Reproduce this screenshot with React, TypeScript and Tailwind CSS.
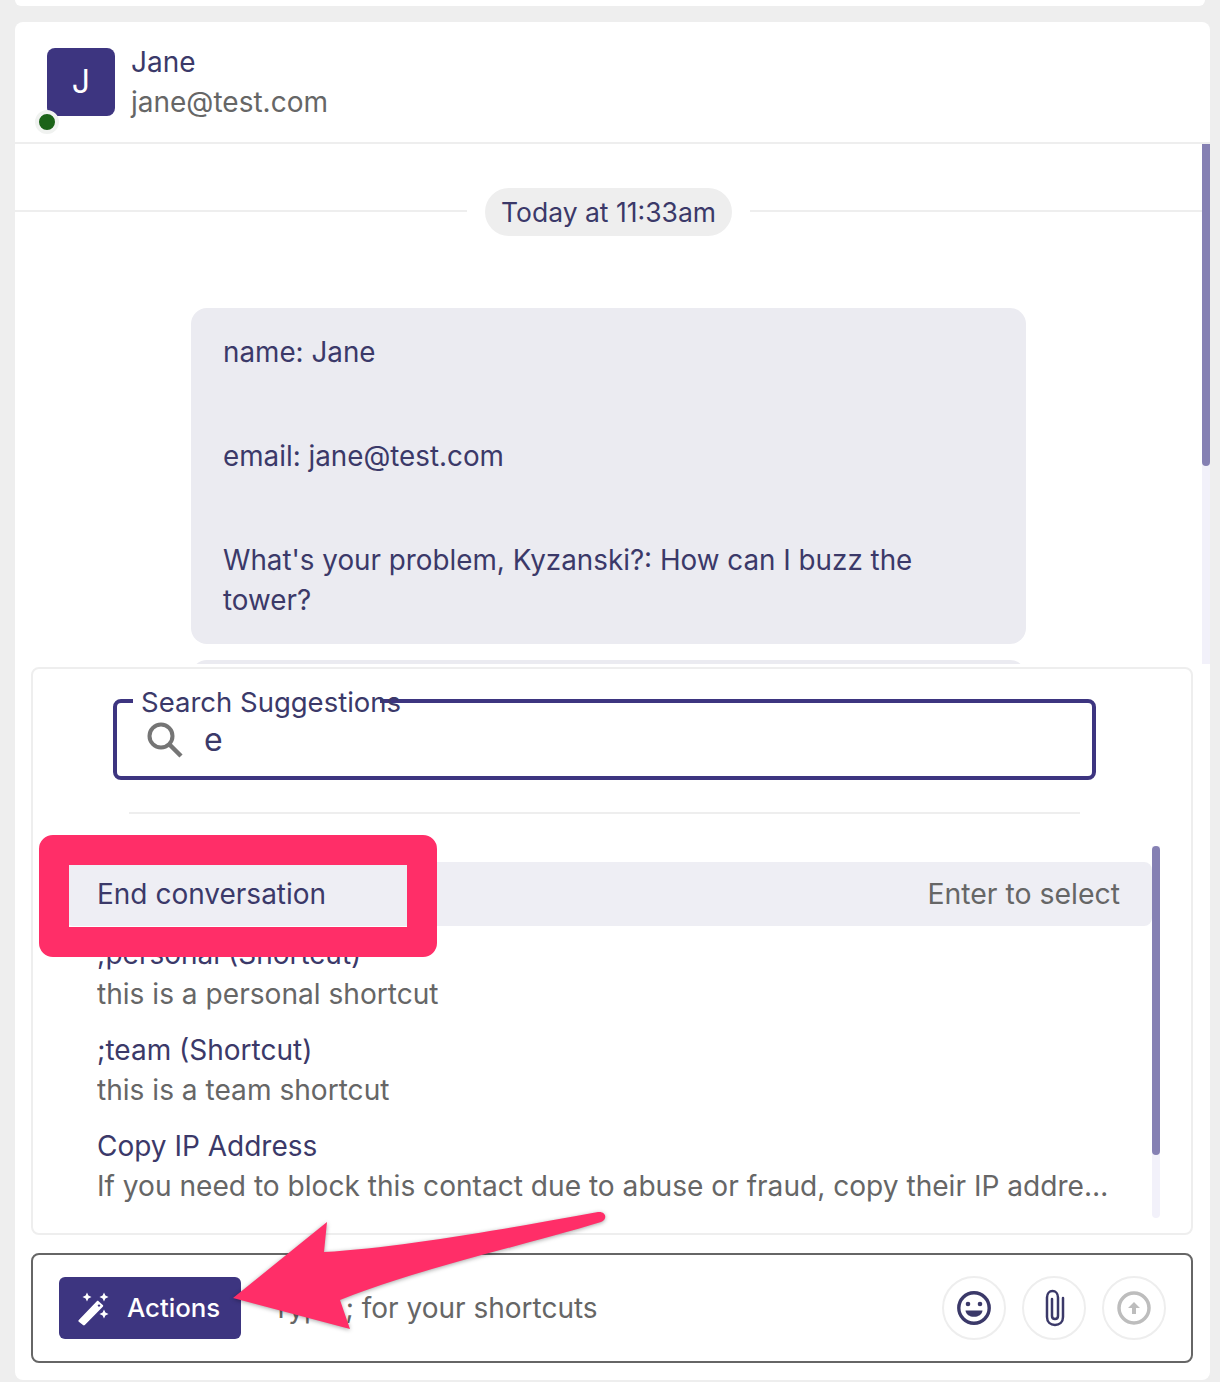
export default function App() {
  const rows = [
    { title: ";personal (Shortcut)", desc: "this is a personal shortcut" },
    { title: ";team (Shortcut)", desc: "this is a team shortcut" },
    {
      title: "Copy IP Address",
      desc: "If you need to block this contact due to abuse or fraud, copy their IP address and add it to your block list",
    },
  ];

  return (
    <div className="relative w-[1220px] h-[1382px] overflow-hidden bg-[#eeeeee] font-['Inter',sans-serif] text-[28px] leading-[40px] text-[#3b3969]">
      <div className="h-[6px] bg-white rounded-b-[6px] mx-[15px]" />

      {/* Conversation card */}
      <div className="ml-[15px] mr-[10px] mt-[16px] h-[1358px] bg-white rounded-[8px] flex flex-col overflow-hidden">
        {/* Header */}
        <div className="h-[122px] shrink-0 border-b-2 border-[#eeeeee] pl-[32px] pt-[26px] flex gap-[16px]">
          <div className="relative w-[68px] h-[68px] bg-[#3d3580] rounded-[8px] flex items-center justify-center text-white text-[32px]">
            J
            <span className="absolute left-[-12px] top-[62px] w-[24px] h-[24px] rounded-full bg-[#1b6318] border-4 border-[#f0f2f0]" />
          </div>
          <div className="-mt-[6px]">
            <div>Jane</div>
            <div className="text-[#666666]">jane@test.com</div>
          </div>
        </div>

        {/* Messages */}
        <div className="h-[520px] shrink-0 flex overflow-hidden">
          <div className="flex-1 overflow-hidden">
            <div className="flex items-center mt-[44px]">
              <div className="flex-1 h-[2px] mb-[2px] bg-[#eeeeee]" />
              <div className="mx-[18px] w-[247px] h-[48px] flex items-center justify-center rounded-full bg-[#eeeeee] text-[26.5px]">
                Today at 11:33am
              </div>
              <div className="flex-1 h-[2px] mb-[2px] bg-[#eeeeee]" />
            </div>
            <div className="ml-[176px] w-[835px] mt-[72px] bg-[#ebebf1] rounded-[16px] px-[32px] py-[24px] text-[27.8px]">
              <p>name: Jane</p>
              <p className="mt-[64px]">email: jane@test.com</p>
              <p className="mt-[64px]">What's your problem, Kyzanski?: How can I buzz the tower?</p>
            </div>
            <div className="ml-[176px] w-[835px] mt-[16px] h-[80px] bg-[#ebebf1] rounded-[16px]" />
          </div>
          <div className="w-[8px] bg-[#f2f1fa]">
            <div className="h-[322px] bg-[#8580b3] rounded-b-[4px]" />
          </div>
        </div>

        {/* Suggestions */}
        <div className="ml-[16px] mr-[17px] mt-[3px] h-[568px] shrink-0 border-2 border-[#eeeeee] rounded-[8px] flex flex-col">
          <div className="relative ml-[80px] mt-[30px] w-[983px] h-[81px] shrink-0 border-4 border-[#3d3580] rounded-[8px] flex items-center pl-[31px] pt-[2px]">
            <span className="absolute left-[16px] top-[-4px] w-[247px] h-[4px] bg-white" />
            <span className="absolute left-[24px] top-[-21px] text-[27.5px] whitespace-nowrap">Search Suggestions</span>
            <svg width="36" height="36" viewBox="0 0 36 36" fill="none" stroke="#757575" strokeWidth="4" className="-mt-[1px] -ml-[1px]">
              <circle cx="14" cy="14" r="11.5" />
              <path d="M22.5 22.5 L34 34" strokeWidth="4.5" />
            </svg>
            <span className="ml-[21px] -mt-[2px] text-[32px]">e</span>
          </div>
          <div className="ml-[96px] mt-[32px] w-[951px] h-[2px] shrink-0 bg-[#eeeeee]" />
          <div className="mt-[32px] flex pl-[32px] pr-[31px]">
            <div className="flex-1 min-w-0 pt-[16px]">
              <div className="h-[64px] bg-[#eeeef4] rounded-[8px] pl-[32px] pr-[32px] flex items-center justify-between">
                <span>End conversation</span>
                <span className="text-[#666666] text-[28.4px]">Enter to select</span>
              </div>
              {rows.map((r) => (
                <div key={r.title} className="pl-[32px] pr-[40px] py-[8px]">
                  <div className="truncate">{r.title}</div>
                  <div className="truncate text-[#666666] text-[28.1px]">{r.desc}</div>
                </div>
              ))}
            </div>
            <div className="w-[8px] h-[372px] bg-[#f2f1fa] rounded-b-[4px]">
              <div className="h-[309px] bg-[#8580b3] rounded-[4px]" />
            </div>
          </div>
        </div>

        {/* Composer */}
        <div className="ml-[16px] mr-[17px] mt-[18px] h-[110px] shrink-0 border-2 border-[#666666] rounded-[8px] flex items-center pl-[26px] pr-[25px]">
          <button className="w-[182px] h-[62px] bg-[#3d3580] rounded-[6px] flex items-center pl-[17px] gap-[15px] text-white font-medium text-[25.8px]">
            <svg width="36" height="36" viewBox="0 0 36 36" fill="currentColor">
              <path d="M11 2.5 L12.4 5.6 L15.5 7 L12.4 8.4 L11 11.5 L9.6 8.4 L6.5 7 L9.6 5.6 Z" />
              <path d="M28 2.5 L29.4 5.6 L32.5 7 L29.4 8.4 L28 11.5 L26.6 8.4 L23.5 7 L26.6 5.6 Z" />
              <path d="M28 19.5 L29.4 22.6 L32.5 24 L29.4 25.4 L28 28.5 L26.6 25.4 L23.5 24 L26.6 22.6 Z" />
              <path d="M2.8 30 L20.8 11.2 C21.4 10.6 22 10.6 22.6 11.2 L26.8 15 C27.4 15.6 27.4 16.2 26.8 16.8 L8.8 35 C8.2 35.6 7.6 35.6 7 35 L2.8 31.8 C2.2 31.2 2.2 30.6 2.8 30 Z M21.5 15.6 L23 17 L24.5 15.6 L23 14.2 Z" fillRule="evenodd" />
            </svg>
            Actions
          </button>
          <div className="ml-[31px] flex-1 text-[#666666]">Type ; for your shortcuts</div>
          <div className="flex gap-[16px]">
            <div className="w-[64px] h-[64px] rounded-full border-2 border-[#eeeeee] flex items-center justify-center">
              <svg width="36" height="36" viewBox="0 0 36 36">
                <circle cx="18" cy="18" r="15.2" fill="none" stroke="#3b3969" strokeWidth="3.4" />
                <circle cx="12" cy="14" r="2.3" fill="#3b3969" />
                <circle cx="24" cy="14" r="2.3" fill="#3b3969" />
                <path d="M9.5 20.5 H26.5 C26 24.5 22.5 26.8 18 26.8 C13.5 26.8 10 24.5 9.5 20.5 Z" fill="#3b3969" />
              </svg>
            </div>
            <div className="w-[64px] h-[64px] rounded-full border-2 border-[#eeeeee] flex items-center justify-center">
              <svg width="24" height="38" viewBox="0 0 24 38" fill="none" stroke="#3b3969" strokeWidth="2.5" strokeLinecap="round">
                <path d="M21 9 V28 C21 33 17.5 36 13 36 C8.5 36 5 33 5 28 V8.5 C5 4.5 7.5 2 10.5 2 C13.5 2 16 4.5 16 8.5 V27 C16 29 14.8 30 13 30 C11.2 30 10 29 10 27 V10" />
              </svg>
            </div>
            <div className="w-[64px] h-[64px] rounded-full border-2 border-[#eeeeee] flex items-center justify-center">
              <svg width="36" height="36" viewBox="0 0 36 36" fill="none">
                <circle cx="18" cy="18" r="15" stroke="#bdbdbd" strokeWidth="3.5" />
                <path d="M18 12 L24 18 H20 V24 H16 V18 H12 Z" fill="#bdbdbd" />
              </svg>
            </div>
          </div>
        </div>
      </div>

      {/* Annotation box */}
      <div className="absolute left-[39px] top-[835px] w-[398px] h-[122px] border-[30px] border-[#ff2e68] rounded-[14px]" />

      {/* Annotation arrow */}
      <svg className="absolute left-0 top-0 drop-shadow-[0_1px_2px_rgba(0,0,0,0.35)]" width="1220" height="1382" viewBox="0 0 1220 1382">
        <path
          d="M233 1298 L327 1222 L324 1252 C400 1248 510 1228 598 1212 C606 1211 608 1219 601 1222 C530 1244 420 1268 340 1300 L350 1329 Z"
          fill="#ff2e68"
        />
      </svg>
    </div>
  );
}
